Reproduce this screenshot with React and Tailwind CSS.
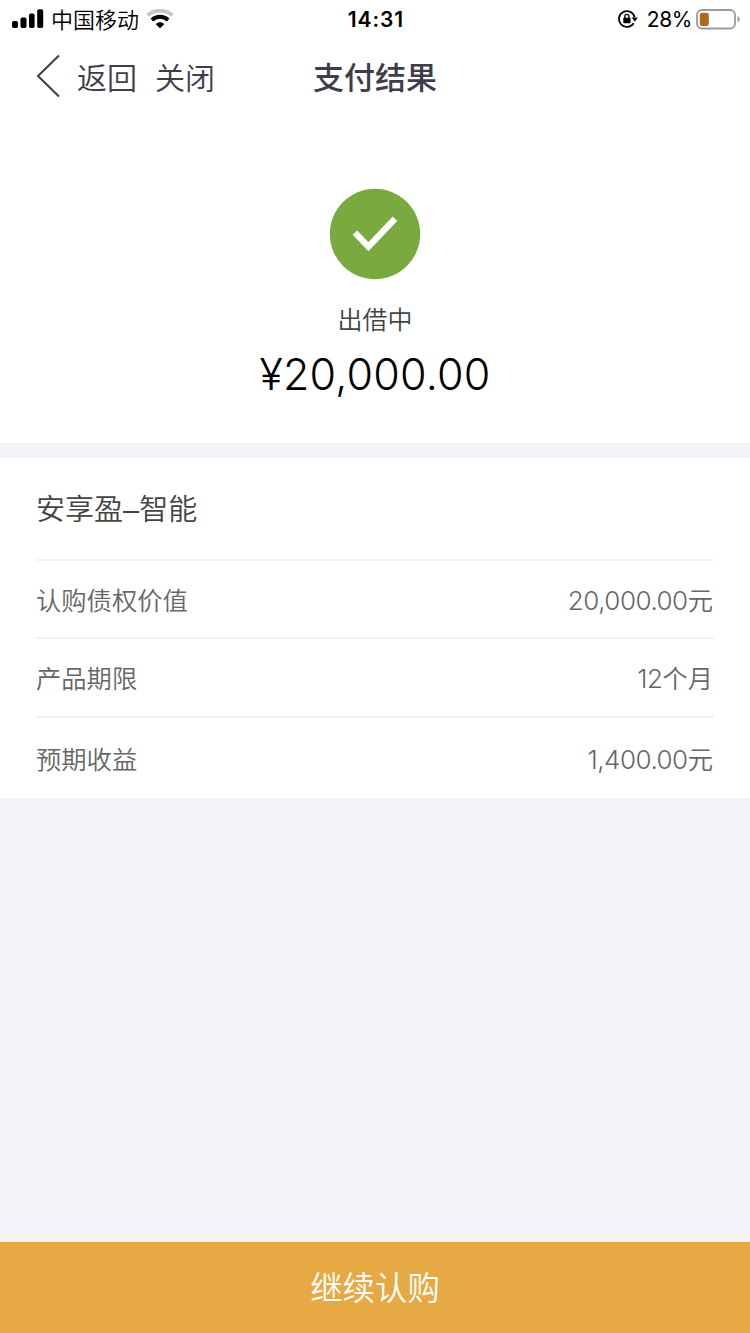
import React from 'react';

const details = [
  { label: '认购债权价值', value: '20,000.00', unit: '元', rowClass: 'h-[78px]' },
  { label: '产品期限', value: '12', unit: '个月', rowClass: 'h-[79px]' },
  { label: '预期收益', value: '1,400.00', unit: '元', rowClass: 'h-[82px]' },
];

const SignalIcon = () => (
  <svg width="32" height="20" viewBox="0 0 32 20" fill="#000">
    <rect x="0" y="12" width="6" height="7" rx="1.8" />
    <rect x="8.5" y="8.5" width="6" height="10.5" rx="1.8" />
    <rect x="17" y="4.5" width="5.6" height="14.5" rx="1.8" />
    <rect x="25.2" y="0.3" width="6" height="18.7" rx="1.8" />
  </svg>
);

const WifiIcon = () => (
  <svg width="28" height="20" viewBox="0 0 28 20" fill="none">
    <path d="M1.6 6.4 C8.4 0.2 19.6 0.2 26.4 6.4" stroke="#c6c6c6" strokeWidth="3.8" />
    <path d="M5.9 10.9 C10.5 6.8 17.5 6.8 22.1 10.9" stroke="#000" strokeWidth="4" />
    <path d="M9.8 15.2 C12.2 12.6 15.8 12.6 18.2 15.2 L14 19.2 Z" fill="#000" />
  </svg>
);

const RotationLockIcon = () => (
  <svg width="20" height="18" viewBox="0 0 20 18" fill="none">
    <path d="M15.6 13.2 A7.9 7.9 0 1 1 16.6 7.2" stroke="#000" strokeWidth="1.8" />
    <path d="M13.6 7.5 H19.8 L16.8 11.7 Z" fill="#000" />
    <rect x="5.3" y="7.8" width="7.2" height="5.4" rx="0.6" fill="#000" />
    <path d="M6.9 8.5 V6.4 A2 2 0 0 1 10.9 6.4 V8.5" stroke="#000" strokeWidth="1.4" />
  </svg>
);

const BatteryIcon = () => (
  <svg width="44" height="21" viewBox="0 0 44 21" fill="none">
    <rect x="1" y="1" width="38" height="18.5" rx="5" stroke="#9b9b9b" strokeWidth="1.8" />
    <rect x="3.8" y="3.7" width="9" height="13.2" rx="2.2" fill="#b1691b" />
    <path d="M41.5 7 Q43.8 8.2 43.8 10.3 Q43.8 12.4 41.5 13.6 Z" fill="#9b9b9b" />
  </svg>
);

const StatusBar = () => (
  <div className="grid h-[38px] grid-cols-3 items-center pl-3 pr-[10px] text-black">
    <div className="flex items-center">
      <SignalIcon />
      <span className="ml-[7px] pt-[3px] text-[22px] font-[350] leading-none">中国移动</span>
      <span className="ml-[7px]">
        <WifiIcon />
      </span>
    </div>
    <div className="text-center font-['Inter'] text-[21px] font-semibold leading-none tracking-[0.9px]">14:31</div>
    <div className="flex items-center justify-end">
      <RotationLockIcon />
      <span className="ml-[9px] mr-1 font-['Inter'] text-[21px] leading-none tracking-[-0.4px]">28%</span>
      <BatteryIcon />
    </div>
  </div>
);

const NavBar = () => (
  <div className="grid h-[76px] grid-cols-3 items-center text-[#3f3d4b]">
    <div className="flex items-center pl-9 text-[30px] font-[350] leading-none">
      <svg width="25" height="44" viewBox="0 0 25 44" fill="none">
        <path d="M23 1.5 L2 22 L23 42.5" stroke="#3f3d4b" strokeWidth="2" />
      </svg>
      <button className="ml-4 pt-[5px] leading-none">返回</button>
      <button className="ml-[18px] pt-[5px] leading-none">关闭</button>
    </div>
    <h1 className="pt-1 text-center text-[31px] font-medium leading-none">支付结果</h1>
  </div>
);

const App = () => {
  return (
    <div className="flex h-[1333px] w-[750px] flex-col bg-[#f3f3f8] font-['Liberation_Sans','Noto_Sans_CJK_SC',sans-serif]">
      <div className="h-[443px] bg-white">
        <StatusBar />
        <NavBar />

        {/* Result */}
        <div className="flex flex-col items-center pt-[74px]">
          <svg width="92" height="92" viewBox="0 0 92 92" fill="none">
            <circle cx="46" cy="46" r="45.2" fill="#7aa93f" />
            <path d="M25.9 44.6 L39.4 58.6 L66 30.8" stroke="#fff" strokeWidth="6.3" />
          </svg>
          <div className="mt-[27px] text-[25px] font-[350] leading-[26px] text-[#444]">出借中</div>
          <div className="mt-[15px] font-['Inter'] text-[43px] font-[350] leading-[52px] tracking-[0.2px] text-black">
            ¥20,000.00
          </div>
        </div>
      </div>

      {/* Order details */}
      <div className="mt-[15px] bg-white px-9">
        <h2 className="flex h-[101px] items-center pt-[5px] text-[29px] font-[350] text-[#444]">安享盈–智能</h2>
        {details.map((item) => (
          <div
            key={item.label}
            className={`flex items-center justify-between border-t-2 border-[#f2f2f2] pr-px text-[25.3px] font-[350] text-[#666] ${item.rowClass}`}
          >
            <span className="pt-[5px]">{item.label}</span>
            <span className="pt-[3px]">
              <span className="font-['Inter'] text-[26px] font-light tracking-[-0.5px]">{item.value}</span>
              {item.unit}
            </span>
          </div>
        ))}
      </div>

      <button className="mt-auto h-[91px] bg-[#e7a943] pt-1 text-[32.4px] font-[350] text-white">继续认购</button>
    </div>
  );
};

export default App;
